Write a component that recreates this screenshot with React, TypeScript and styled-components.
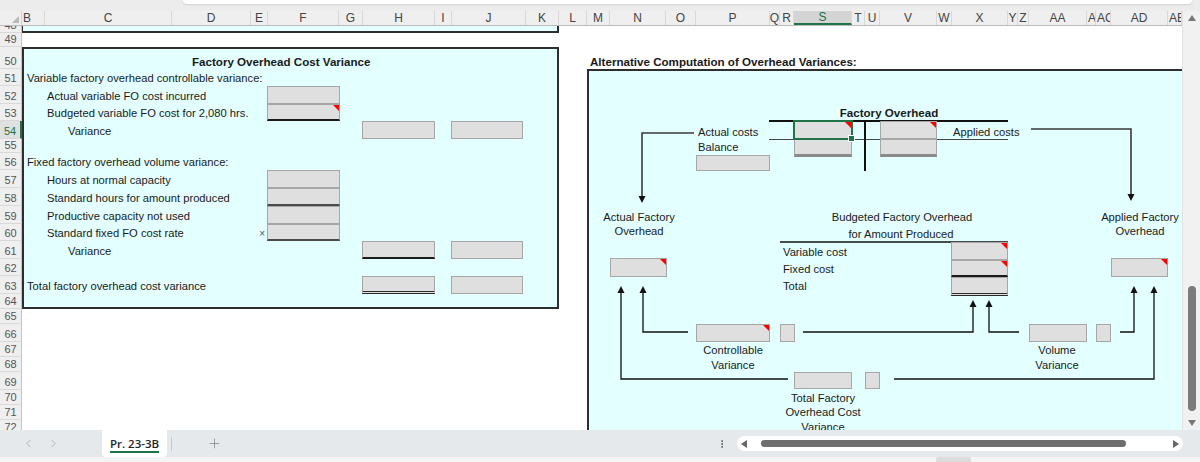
import React from "react";
import styled, { createGlobalStyle, css } from "styled-components";
import { ChevronLeft, ChevronRight, Plus, EllipsisVertical } from "lucide-react";

const GlobalStyle = createGlobalStyle`
  html, body { margin: 0; padding: 0; }
  body {
    font-family: "Liberation Sans", Arial, sans-serif;
    background: #f3f3f3;
  }
`;

const CYAN = "#e3ffff";
const GREEN = "#217346";
const INK = "#1a1a1a";

// column letters and pixel widths, as read off the sheet
const COLS: [string, number][] = [
  ["B", 23], ["C", 127], ["D", 79], ["E", 17], ["F", 71], ["G", 24], ["H", 72],
  ["I", 17], ["J", 74], ["K", 33], ["L", 28], ["M", 23], ["N", 56], ["O", 30],
  ["P", 74], ["Q", 10], ["R", 14], ["S", 58], ["T", 13], ["U", 15], ["V", 57],
  ["W", 15], ["X", 56], ["Y", 10], ["Z", 11], ["AA", 58], ["AB", 9], ["AC", 15],
  ["AD", 57], ["AE", 14],
];
const CLIPPED = ["B", "AB", "AC", "AE"];

const ROWS: [number, number][] = [
  [48, 7], [49, 14], [50, 22], [51, 17], [52, 18], [53, 17], [54, 18], [55, 14],
  [56, 17], [57, 18], [58, 18], [59, 18], [60, 17], [61, 18], [62, 17], [63, 18],
  [64, 15], [65, 15], [66, 18], [67, 15], [68, 15], [69, 18], [70, 15], [71, 15],
  [72, 15],
];

const Frame = styled.div`
  width: 1200px;
  height: 462px;
  overflow: hidden;
  display: flex;
  flex-direction: column;
  background: #f3f3f3;
`;

const TopStrip = styled.div`
  height: 11px;
  flex: none;
  background: #ececec;
  display: flex;
  padding-left: 183px;
  box-sizing: border-box;
`;

const FormulaEdge = styled.div`
  width: 1009px;
  height: 4px;
  background: #fff;
  border-radius: 0 0 4px 4px;
  box-shadow: 0 1px 2px rgba(0, 0, 0, 0.12);
`;

const Main = styled.div`
  display: flex;
  height: 419px;
  flex: none;
`;

const SheetColumn = styled.div`
  width: 1182px;
  display: flex;
  flex-direction: column;
`;

const ColHeader = styled.div`
  display: flex;
  height: 15px;
  background: #efefef;
  border-bottom: 1px solid #bcbcbc;
  box-sizing: border-box;
  flex: none;
`;

const Corner = styled.div`
  width: 22px;
  flex: none;
  display: flex;
  align-items: flex-end;
  justify-content: flex-end;
  padding: 0 2px 2px 0;
  box-sizing: border-box;
  border-right: 1px solid #cfcfcf;
`;

const CornerMark = styled.span`
  width: 0;
  height: 0;
  border-left: 7px solid transparent;
  border-bottom: 7px solid #b8b8b8;
`;

const ColLabel = styled.div<{ $w: number; $active?: boolean; $left?: boolean }>`
  width: ${(p) => p.$w}px;
  flex: none;
  box-sizing: border-box;
  overflow: hidden;
  display: flex;
  align-items: center;
  justify-content: ${(p) => (p.$left ? "flex-start" : "center")};
  padding-left: ${(p) => (p.$left ? "1px" : "0")};
  font-size: 12px;
  color: #444;
  white-space: nowrap;
  border-right: 1px solid #d8d8d8;
  ${(p) =>
    p.$active &&
    css`
      background: #d4d4d4;
      color: ${GREEN};
      border-bottom: 2px solid ${GREEN};
    `}
`;

const Body = styled.div`
  flex: 1;
  display: grid;
  grid-template-columns: 22px 537px 28px 1fr;
  grid-template-rows: ${ROWS.map(([, h]) => `${h}px`).join(" ")};
  background: #fff;
  overflow: hidden;
  font-size: 11.2px;
  color: ${INK};
`;

const RowNum = styled.div<{ $row: number; $active?: boolean }>`
  grid-column: 1;
  grid-row: ${(p) => p.$row};
  background: ${(p) => (p.$active ? "#e0e0e0" : "#efefef")};
  border-bottom: 1px solid #d9d9d9;
  border-right: ${(p) => (p.$active ? `2px solid ${GREEN}` : "1px solid #c4c4c4")};
  box-sizing: border-box;
  overflow: hidden;
  display: flex;
  align-items: flex-end;
  justify-content: center;
  font-size: 11px;
  line-height: 13px;
  color: ${(p) => (p.$active ? GREEN : "#555")};
`;

const TopBand = styled.div`
  grid-column: 2;
  grid-row: 1;
  background: ${CYAN};
  border-bottom: 2px solid #2e2e2e;
  border-right: 2px solid #2e2e2e;
  border-left: 1px solid #2e2e2e;
`;

const LeftPanel = styled.section`
  grid-column: 2;
  grid-row: 3 / 18;
  background: ${CYAN};
  border: 2px solid #2e2e2e;
  display: grid;
  grid-template-columns: 21px 127px 79px 16px 73px 22px 73px 16px 72px 1fr;
  grid-template-rows: 20px 17px 18px 17px 18px 14px 17px 18px 18px 18px 17px 18px 17px 18px 1fr;
`;

const Text = styled.div<{ $row: number; $col: number; $span?: number; $pad?: number; $bold?: boolean; $right?: boolean }>`
  grid-row: ${(p) => p.$row};
  grid-column: ${(p) => p.$col} / span ${(p) => p.$span ?? 1};
  align-self: end;
  line-height: 13px;
  padding: 0 ${(p) => (p.$right ? "2px" : "0")} 1px ${(p) => p.$pad ?? 0}px;
  white-space: nowrap;
  font-weight: ${(p) => (p.$bold ? 700 : 400)};
  font-size: ${(p) => (p.$bold ? "11.6px" : "11.2px")};
  text-align: ${(p) => (p.$right ? "right" : "left")};
`;

const Times = styled(Text)`
  font-size: 10px;
  color: #555;
`;

type Under = "single" | "thick" | "double" | "shadow";

type FieldProps = { $flag?: boolean; $under?: Under; $selected?: boolean };

const fieldLook = css<FieldProps>`
  box-sizing: border-box;
  background: #dfdfdf;
  border: 1px solid #a6a6a6;
  ${(p) => p.$under === "single" && css`border-bottom: 2px solid ${INK};`}
  ${(p) => p.$under === "thick" && css`border-bottom: 2px solid #4a4a4a;`}
  ${(p) => p.$under === "double" && css`border-bottom: 3px double #2a2a2a;`}
  ${(p) => p.$under === "shadow" && css`border-bottom: 3px solid #8a8a8a;`}
  ${(p) =>
    p.$flag &&
    css`
      &::after {
        content: "";
        position: absolute;
        top: 0;
        right: 0;
        border-top: 6px solid #f00;
        border-left: 6px solid transparent;
      }
    `}
  ${(p) =>
    p.$selected &&
    css`
      outline: 2px solid ${GREEN};
      outline-offset: -1px;
      z-index: 1;
      &::before {
        content: "";
        position: absolute;
        right: -4px;
        bottom: -4px;
        width: 5px;
        height: 5px;
        background: ${GREEN};
        border: 1px solid #fff;
      }
    `}
`;

const Field = styled.div<FieldProps & { $row: number; $col: number }>`
  position: relative;
  grid-row: ${(p) => p.$row};
  grid-column: ${(p) => p.$col};
  ${fieldLook}
`;

const RightTitle = styled.div`
  grid-column: 4;
  grid-row: 3;
  align-self: end;
  padding: 0 0 1px 3px;
  line-height: 13px;
  font-weight: 700;
  font-size: 11.6px;
  white-space: nowrap;
`;

const RightPanel = styled.section`
  grid-column: 4;
  grid-row: 4 / 26;
  background: ${CYAN};
  border-top: 2px solid #2e2e2e;
  border-left: 2px solid #2e2e2e;
  position: relative;
  overflow: hidden;
`;

// diagram coordinates are page pixels; the panel's padding box starts here
const OX = 589;
const OY = 71;

const Wires = styled.svg`
  position: absolute;
  left: 0;
  top: 0;
`;

const Box = styled.div<FieldProps & { $x: number; $y: number; $w: number; $h: number }>`
  ${fieldLook}
  position: absolute;
  left: ${(p) => p.$x - OX}px;
  top: ${(p) => p.$y - OY}px;
  width: ${(p) => p.$w}px;
  height: ${(p) => p.$h}px;
`;

const Note = styled.div<{ $x: number; $y: number; $center?: boolean; $bold?: boolean; $lh?: number }>`
  position: absolute;
  left: ${(p) => p.$x - OX}px;
  top: ${(p) => p.$y - OY - (p.$lh ?? 14) / 2}px;
  line-height: ${(p) => p.$lh ?? 14}px;
  white-space: nowrap;
  font-weight: ${(p) => (p.$bold ? 700 : 400)};
  font-size: ${(p) => (p.$bold ? "11.6px" : "11.2px")};
  ${(p) =>
    p.$center &&
    css`
      transform: translateX(-50%);
      text-align: center;
    `}
`;

const VScroll = styled.div`
  width: 18px;
  flex: none;
  background: #f1f1f1;
  border-left: 1px solid #e2e2e2;
  box-sizing: border-box;
  display: flex;
  flex-direction: column;
  align-items: center;
`;

const ArrowUp = styled.span`
  margin-top: 4px;
  width: 0;
  height: 0;
  border-left: 4px solid transparent;
  border-right: 4px solid transparent;
  border-bottom: 6px solid #777;
`;

const ArrowDown = styled.span`
  margin: 9px 0 4px;
  width: 0;
  height: 0;
  border-left: 4px solid transparent;
  border-right: 4px solid transparent;
  border-top: 6px solid #777;
`;

const VThumb = styled.div`
  margin-top: auto;
  width: 8px;
  height: 125px;
  border-radius: 4px;
  background: #7b7b7b;
`;

const TabBar = styled.div`
  height: 27px;
  flex: none;
  background: #e6e9ec;
  display: flex;
  align-items: center;
`;

const NavArea = styled.div`
  width: 102px;
  display: flex;
  align-items: center;
  gap: 12px;
  padding-left: 22px;
  box-sizing: border-box;
  color: #a3a3a3;
`;

const SheetTab = styled.div`
  align-self: stretch;
  width: 65px;
  background: #fff;
  display: flex;
  justify-content: center;
  align-items: center;
  border-radius: 0 0 4px 4px;
`;

const TabName = styled.span`
  font-family: "Open Sans", "Noto Sans", sans-serif;
  font-weight: 600;
  font-size: 11.5px;
  color: #222;
  padding-top: 3px;
  border-bottom: 2px solid ${GREEN};
  line-height: 14px;
`;

const TabSep = styled.div`
  width: 1px;
  height: 14px;
  background: #c9c9c9;
  margin-left: 4px;
`;

const AddSheet = styled.div`
  margin-left: 35px;
  display: flex;
  color: #8a8a8a;
`;

const Dots = styled.div`
  margin-left: auto;
  width: 10px;
  display: flex;
  justify-content: center;
  color: #444;
`;

const HTrack = styled.div`
  margin: 0 17px 0 10px;
  width: 446px;
  height: 15px;
  background: #fff;
  border-radius: 8px;
  display: flex;
  align-items: center;
  padding: 0 4px;
  box-sizing: border-box;
`;

const TriLeft = styled.span`
  width: 0;
  height: 0;
  border-top: 4px solid transparent;
  border-bottom: 4px solid transparent;
  border-right: 6px solid #666;
`;

const TriRight = styled.span`
  margin-left: auto;
  width: 0;
  height: 0;
  border-top: 4px solid transparent;
  border-bottom: 4px solid transparent;
  border-left: 6px solid #666;
`;

const HThumb = styled.div`
  margin-left: 14px;
  width: 365px;
  height: 7px;
  border-radius: 4px;
  background: #6e6e6e;
`;

const StatusStrip = styled.div`
  flex: 1;
  background: #f4f4f4;
  display: flex;
  padding-left: 936px;
`;

const StatusBit = styled.div`
  width: 35px;
  background: #dcdcdc;
  border-radius: 2px 2px 0 0;
`;

const upArrow = (x: number, y: number) => `${x - 3.5},${y + 7} ${x + 3.5},${y + 7} ${x},${y}`;
const downArrow = (x: number, y: number) => `${x - 3.5},${y - 7} ${x + 3.5},${y - 7} ${x},${y}`;

function Diagram() {
  return (
    <RightPanel>
      <Wires width={600} height={370} viewBox={`${OX} ${OY} 600 370`}>
        {/* T account */}
        <line x1={769} y1={121} x2={1008} y2={121} stroke="#111" strokeWidth={2} />
        <line x1={769} y1={139.5} x2={1008} y2={139.5} stroke="#444" strokeWidth={1} />
        <line x1={865} y1={120} x2={865} y2={171} stroke="#111" strokeWidth={2} />
        <line x1={780} y1={242} x2={1008} y2={242} stroke="#111" strokeWidth={1.5} />
        <g fill="none" stroke="#3a3a3a" strokeWidth={1.6}>
          <path d="M694 133 H642 V197" />
          <path d="M1031 129 H1131 V195" />
        </g>
        <g fill="none" stroke="#111" strokeWidth={1.3}>
          <path d="M621 292 V379 H788" />
          <path d="M894 379 H1154 V292" />
          <path d="M643 292 V332 H688" />
          <path d="M803 332 H973 V306" />
          <path d="M989 306 V332 H1019" />
          <path d="M1120 332 H1134 V292" />
        </g>
        <g fill="#111">
          <polygon points={downArrow(642, 203)} />
          <polygon points={downArrow(1131, 201)} />
          <polygon points={upArrow(621, 286)} />
          <polygon points={upArrow(643, 286)} />
          <polygon points={upArrow(1134, 286)} />
          <polygon points={upArrow(1154, 286)} />
          <polygon points={upArrow(973, 300)} />
          <polygon points={upArrow(989, 300)} />
        </g>
      </Wires>

      <Note $x={889} $y={113} $center $bold>Factory Overhead</Note>
      <Note $x={698} $y={132}>Actual costs</Note>
      <Note $x={698} $y={147}>Balance</Note>
      <Note $x={953} $y={132}>Applied costs</Note>

      <Box $x={696} $y={155} $w={74} $h={16} />
      <Box $x={794} $y={139} $w={58} $h={18} $under="shadow" />
      <Box $x={794} $y={121} $w={58} $h={18} $flag $selected />
      <Box $x={880} $y={139} $w={57} $h={18} $under="shadow" />
      <Box $x={880} $y={121} $w={57} $h={18} $flag />

      <Note $x={639} $y={217} $center>
        Actual Factory
        <br />
        Overhead
      </Note>
      <Note $x={1140} $y={217} $center>
        Applied Factory
        <br />
        Overhead
      </Note>
      <Note $x={902} $y={217} $center>Budgeted Factory Overhead</Note>
      <Note $x={901} $y={234} $center>for Amount Produced</Note>
      <Note $x={783} $y={252}>Variable cost</Note>
      <Note $x={783} $y={269}>Fixed cost</Note>
      <Note $x={783} $y={286}>Total</Note>

      <Box $x={610} $y={258} $w={57} $h={19} $flag />
      <Box $x={1111} $y={258} $w={57} $h={19} $flag />
      <Box $x={951} $y={242} $w={57} $h={18} $flag />
      <Box $x={951} $y={260} $w={57} $h={17} $flag $under="single" />
      <Box $x={951} $y={277} $w={57} $h={19} $under="double" />

      <Box $x={696} $y={324} $w={74} $h={18} $flag />
      <Box $x={780} $y={324} $w={15} $h={18} />
      <Box $x={1029} $y={324} $w={58} $h={18} />
      <Box $x={1096} $y={324} $w={15} $h={18} />
      <Box $x={794} $y={372} $w={58} $h={17} />
      <Box $x={865} $y={372} $w={15} $h={17} />

      <Note $x={733} $y={350} $center $lh={15}>
        Controllable
        <br />
        Variance
      </Note>
      <Note $x={1057} $y={350} $center $lh={15}>
        Volume
        <br />
        Variance
      </Note>
      <Note $x={823} $y={398} $center $lh={14.5}>
        Total Factory
        <br />
        Overhead Cost
        <br />
        Variance
      </Note>
    </RightPanel>
  );
}

function CostVariance() {
  return (
    <LeftPanel>
      <Text $row={1} $col={2} $span={8} $pad={147} $bold>
        Factory Overhead Cost Variance
      </Text>
      <Text $row={2} $col={1} $span={6} $pad={3}>
        Variable factory overhead controllable variance:
      </Text>
      <Text $row={3} $col={2} $span={3} $pad={2}>Actual variable FO cost incurred</Text>
      <Field $row={3} $col={5} />
      <Text $row={4} $col={2} $span={3} $pad={2}>Budgeted variable FO cost for 2,080 hrs.</Text>
      <Field $row={4} $col={5} $flag $under="single" />
      <Text $row={5} $col={2} $pad={23}>Variance</Text>
      <Field $row={5} $col={7} />
      <Field $row={5} $col={9} />

      <Text $row={7} $col={1} $span={6} $pad={3}>Fixed factory overhead volume variance:</Text>
      <Text $row={8} $col={2} $span={3} $pad={2}>Hours at normal capacity</Text>
      <Field $row={8} $col={5} />
      <Text $row={9} $col={2} $span={3} $pad={2}>Standard hours for amount produced</Text>
      <Field $row={9} $col={5} $under="thick" />
      <Text $row={10} $col={2} $span={3} $pad={2}>Productive capacity not used</Text>
      <Field $row={10} $col={5} />
      <Text $row={11} $col={2} $span={2} $pad={2}>Standard fixed FO cost rate</Text>
      <Times $row={11} $col={4} $right>×</Times>
      <Field $row={11} $col={5} $under="thick" />
      <Text $row={12} $col={2} $pad={23}>Variance</Text>
      <Field $row={12} $col={7} $under="single" />
      <Field $row={12} $col={9} />

      <Text $row={14} $col={1} $span={6} $pad={3}>Total factory overhead cost variance</Text>
      <Field $row={14} $col={7} $under="double" />
      <Field $row={14} $col={9} />
    </LeftPanel>
  );
}

export default function App() {
  return (
    <>
      <GlobalStyle />
      <Frame>
        <TopStrip>
          <FormulaEdge />
        </TopStrip>
        <Main>
          <SheetColumn>
            <ColHeader>
              <Corner>
                <CornerMark />
              </Corner>
              {COLS.map(([name, w]) => (
                <ColLabel key={name} $w={w} $active={name === "S"} $left={CLIPPED.includes(name)}>
                  {name}
                </ColLabel>
              ))}
            </ColHeader>
            <Body>
              {ROWS.map(([n], i) => (
                <RowNum key={n} $row={i + 1} $active={n === 54}>
                  {n}
                </RowNum>
              ))}
              <TopBand />
              <CostVariance />
              <RightTitle>Alternative Computation of Overhead Variances:</RightTitle>
              <Diagram />
            </Body>
          </SheetColumn>
          <VScroll>
            <ArrowUp />
            <VThumb />
            <ArrowDown />
          </VScroll>
        </Main>
        <TabBar>
          <NavArea>
            <ChevronLeft size={13} strokeWidth={1.5} />
            <ChevronRight size={13} strokeWidth={1.5} />
          </NavArea>
          <SheetTab>
            <TabName>Pr. 23-3B</TabName>
          </SheetTab>
          <TabSep />
          <AddSheet>
            <Plus size={15} strokeWidth={1.3} />
          </AddSheet>
          <Dots>
            <EllipsisVertical size={14} strokeWidth={2} />
          </Dots>
          <HTrack>
            <TriLeft />
            <HThumb />
            <TriRight />
          </HTrack>
        </TabBar>
        <StatusStrip>
          <StatusBit />
        </StatusStrip>
      </Frame>
    </>
  );
}
